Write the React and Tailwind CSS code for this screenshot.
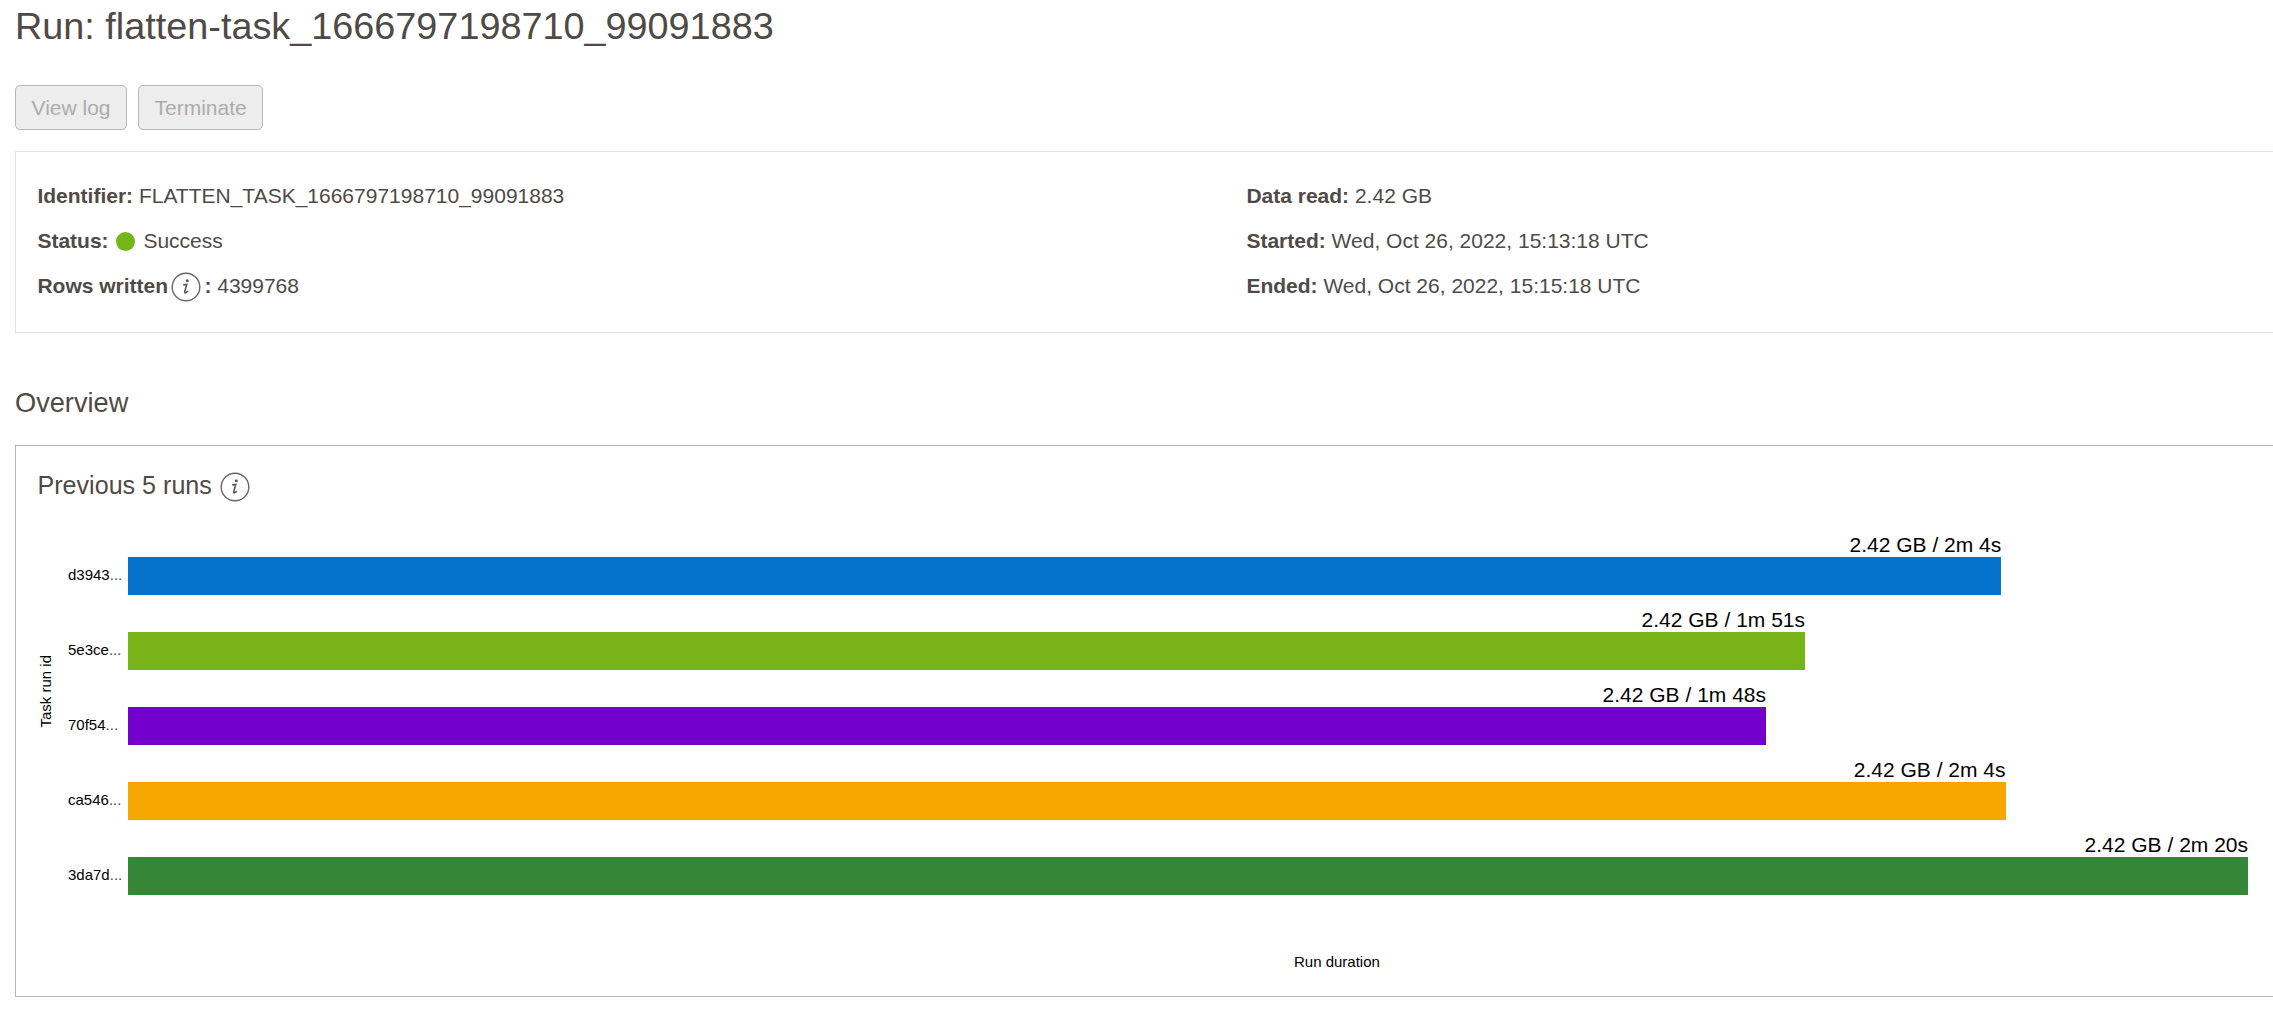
const runs = [
  { id: "d3943", label: "2.42 GB / 2m 4s", width: 1873.3, color: "bg-[#0572ce]" },
  { id: "5e3ce", label: "2.42 GB / 1m 51s", width: 1677, color: "bg-[#76b417]" },
  { id: "70f54", label: "2.42 GB / 1m 48s", width: 1638, color: "bg-[#7202cb]" },
  { id: "ca546", label: "2.42 GB / 2m 4s", width: 1877.5, color: "bg-[#f5a700]" },
  { id: "3da7d", label: "2.42 GB / 2m 20s", width: 2120, color: "bg-[#358637]" },
];

function InfoIcon({ className }) {
  return (
    <svg viewBox="0 0 30 30" className={`h-[30px] w-[30px] shrink-0 ${className}`} fill="none">
      <circle cx="15" cy="15" r="13.8" stroke="#6b6764" strokeWidth="1.4" />
      <circle cx="16.3" cy="8.8" r="1.5" fill="#5c5855" />
      <path d="M12.2 12.9 L15.7 12.4 L13.8 19.4 Q13.5 21.1 14.6 20.8 Q15.7 20.4 16.8 19" stroke="#5c5855" strokeWidth="1.6" />
    </svg>
  );
}

function Field({ label, children }) {
  return (
    <div className="flex h-[45px] items-center whitespace-pre">
      <span className="font-bold">{label}: </span>
      {children}
    </div>
  );
}

function DisabledButton({ children }) {
  return (
    <button disabled className="h-[45px] rounded-[5px] border border-[#b5b9bf] bg-[#ededed] px-[15.5px] text-[21px] leading-[43px] text-[#acacac]">
      {children}
    </button>
  );
}

export default function App() {
  return (
    <div className="h-[1011px] w-[2273px] overflow-hidden bg-white pl-[15px] font-['Liberation_Sans',Arial,sans-serif] text-[21px] text-[#4f4a46]">
      <h1 className="h-[85px] text-[37.8px] leading-[52px]">Run: flatten-task_1666797198710_99091883</h1>
      <div className="flex gap-[11px]">
        <DisabledButton>View log</DisabledButton>
        <DisabledButton>Terminate</DisabledButton>
      </div>

      <section className="mt-[21px] flex h-[182px] w-[2400px] border border-[#e0e1e1] pt-[21px] pl-[21.4px]">
        <div className="w-[1209px]">
          <Field label="Identifier">FLATTEN_TASK_1666797198710_99091883</Field>
          <Field label="Status">
            <span className="mt-[2px] mr-[8px] ml-[2px] h-[19px] w-[19px] rounded-full bg-[#76b417]" />
            Success
          </Field>
          <div className="flex h-[45px] items-center whitespace-pre">
            <span className="font-bold">Rows written</span>
            <InfoIcon className="mt-[3px] ml-[2.5px] mr-[3.8px]" />
            <span className="font-bold">: </span>4399768
          </div>
        </div>
        <div>
          <Field label="Data read">2.42 GB</Field>
          <Field label="Started">Wed, Oct 26, 2022, 15:13:18 UTC</Field>
          <Field label="Ended">Wed, Oct 26, 2022, 15:15:18 UTC</Field>
        </div>
      </section>

      <h2 className="mt-[50px] h-[62px] text-[27.2px] leading-[40px]">Overview</h2>

      <section className="h-[552px] w-[2400px] border border-[#b3b7ba]">
        <div className="flex h-[74px] items-center pt-[5px] pl-[21.5px]">
          <h3 className="text-[25.1px]">Previous 5 runs</h3>
          <InfoIcon className="mt-[3px] ml-[8px]" />
        </div>
        <div className="flex text-black">
          <div className="flex h-[375px] w-[52px] items-center justify-end">
            <span className="mt-[-33px] mr-[14px] rotate-180 text-[15px] leading-[17px] [writing-mode:vertical-rl]">Task run id</span>
          </div>
          <div>
            {runs.map((run) => (
              <div key={run.id} className="flex h-[75px] items-end">
                <div className="flex h-[39px] w-[60px] items-center text-[15px]">
                  {run.id}<span className="text-[#444]">...</span>
                </div>
                <div style={{ width: run.width }}>
                  <div className="text-right text-[21px] leading-[24px]">{run.label}</div>
                  <div className={`h-[38px] ${run.color}`} />
                </div>
              </div>
            ))}
          </div>
        </div>
        <div className="ml-[112px] mt-[57px] w-[2420px] pl-[1166px] text-[15px] leading-[20px] text-black">Run duration</div>
      </section>
    </div>
  );
}
